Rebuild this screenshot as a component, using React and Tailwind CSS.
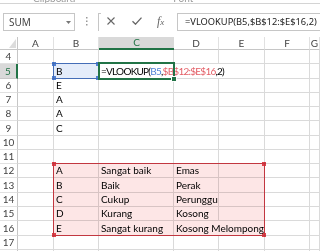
import clsx from "clsx";

const COLS = [
  { id: "A", w: "w-[36px]" },
  { id: "B", w: "w-[45px]" },
  { id: "C", w: "w-[75px]" },
  { id: "D", w: "w-[45px]" },
  { id: "E", w: "w-[46px]" },
  { id: "F", w: "w-[45px]" },
  { id: "G", w: "flex-1" },
];

const ROWS = [
  { n: 4, h: "h-[14px]" },
  { n: 5, h: "h-[15px]", B: "B", C: "formula", open: ["C", "D"] },
  { n: 6, h: "h-[14px]", B: "E" },
  { n: 7, h: "h-[14px]", B: "A" },
  { n: 8, h: "h-[14px]", B: "A" },
  { n: 9, h: "h-[15px]", B: "C" },
  { n: 10, h: "h-[14px]" },
  { n: 11, h: "h-[14px]" },
  { n: 12, h: "h-[14px]", B: "A", C: "Sangat baik", D: "Emas" },
  { n: 13, h: "h-[15px]", B: "B", C: "Baik", D: "Perak" },
  { n: 14, h: "h-[14px]", B: "C", C: "Cukup", D: "Perunggu" },
  { n: 15, h: "h-[14px]", B: "D", C: "Kurang", D: "Kosong" },
  { n: 16, h: "h-[15px]", B: "E", C: "Sangat kurang", D: "Kosong Melompong", open: ["D"] },
  { n: 17, h: "h-[14px]" },
  { n: 18, h: "h-[14px]" },
];

const Ribbon = () => (
  <div className="flex h-[4px] overflow-hidden border-b border-[#d4d4d4] text-[10px] leading-[10px] text-[#9a9a9a]">
    <span className="ml-[33px] -mt-[7px]">Clipboard</span>
    <span className="ml-[98px] -mt-[7px]">Font</span>
  </div>
);

const FormulaBar = () => (
  <div className="flex h-[33px] items-start pt-[9px] text-[#555]">
    <div className="ml-[3px] flex h-[18px] w-[72px] items-center justify-between border border-[#c6c6c6] pl-[5px] pr-[3px] font-['Noto_Sans',sans-serif] text-[10px] text-[#444]">
      <span>SUM</span>
      <svg width="5" height="3" viewBox="0 0 5 3">
        <path d="M0 0h5L2.5 3z" fill="#777" />
      </svg>
    </div>
    <svg className="ml-[11px] mt-[4px]" width="2" height="9" viewBox="0 0 2 9">
      <rect x="0" y="0" width="1.5" height="1.5" fill="#999" />
      <rect x="0" y="3.5" width="1.5" height="1.5" fill="#999" />
      <rect x="0" y="7" width="1.5" height="1.5" fill="#999" />
    </svg>
    <div className="ml-[10px] h-[18px] w-[3px] border-l border-t border-[#c6c6c6]" />
    <svg className="ml-[6px] mt-[4px]" width="8" height="8" viewBox="0 0 8 8">
      <path d="M0.5 0.5l7 7M7.5 0.5l-7 7" stroke="#666" strokeWidth="1.1" />
    </svg>
    <svg className="ml-[17px] mt-[4px]" width="10" height="8" viewBox="0 0 10 8">
      <path d="M0.5 4.2l3 3L9.5 0.6" stroke="#666" strokeWidth="1.3" fill="none" />
    </svg>
    <span className="ml-[15px] mt-[1px] w-[10px] font-['Liberation_Serif',serif] text-[12px] italic leading-[14px] text-[#666]">
      f<span className="text-[9px]">x</span>
    </span>
    <div className="ml-[10px] flex h-[18px] flex-1 items-center border-y border-l border-[#c6c6c6] pl-[7px] font-['Noto_Sans',sans-serif] text-[9.3px] whitespace-nowrap text-[#222]">
      =VLOOKUP(B5,$B$12:$E$16,2)
    </div>
  </div>
);

const Corner = ({ className, color }) => (
  <span className={clsx("absolute size-[4px]", color, className)} />
);

const Marks = ({ color }) => (
  <>
    <Corner color={color} className="-left-[2px] -top-[2px]" />
    <Corner color={color} className="-right-[2px] -top-[2px]" />
    <Corner color={color} className="-left-[2px] -bottom-[2px]" />
    <Corner color={color} className="-right-[2px] -bottom-[2px]" />
  </>
);

// Lato runs wider than Calibri on caps and digits, so the formula is tightened a bit
const Formula = () => (
  <span className="relative tracking-[-0.75px]">
    =VLOOKUP(<span className="text-[#4f80d6]">B5</span>,<span className="text-[#e35d65]">$B$12:$E$16</span>,2)
  </span>
);

const Cell = ({ col, row }) => {
  const value = row[col.id];
  const open = row.open?.includes(col.id);
  const isB5 = row.n === 5 && col.id === "B";
  const isC5 = row.n === 5 && col.id === "C";
  const isB12 = row.n === 12 && col.id === "B";
  return (
    <div
      className={clsx(
        "flex shrink-0 items-center whitespace-nowrap border-b border-[#dadada] pl-[2px]",
        col.w,
        !open && "border-r",
        (isB5 || isC5 || isB12) && "relative"
      )}
    >
      {value === "formula" ? <Formula /> : value}
      {isB5 && (
        <div className="absolute -left-[1px] -top-[1px] h-[16px] w-[46px] border border-[#4f80d6] bg-[#e4ecfa] mix-blend-multiply">
          <Marks color="bg-[#4f80d6]" />
        </div>
      )}
      {isC5 && (
        <div className="absolute -left-[1px] -top-[2px] h-[18px] w-[77px] border-2 border-[#217346]">
          <span className="absolute -bottom-[4px] -right-[4px] size-[6px] border border-white bg-[#217346]" />
        </div>
      )}
      {isB12 && (
        <div className="absolute -left-[1px] -top-[1px] h-[73px] w-[212px] border border-[#e3404a] bg-[#fde6e6] mix-blend-multiply">
          <Marks color="bg-[#e3404a]" />
        </div>
      )}
    </div>
  );
};

const HeaderRow = () => (
  <div className="flex h-[13px]">
    <div className="flex w-[18px] shrink-0 items-end justify-end border-r border-b border-[#c6c6c6] pb-[1px] pr-[1px]">
      <svg width="7" height="9" viewBox="0 0 7 9">
        <path d="M0 9h7V0z" fill="#dcdcdc" />
      </svg>
    </div>
    {COLS.map((col) => (
      <div
        key={col.id}
        className={clsx(
          "flex shrink-0 items-center justify-center",
          col.w,
          col.id === "C"
            ? "border-b-2 border-[#217346] bg-[#d9d9d9] text-[#217346]"
            : "border-r border-b border-r-[#e1e1e1] border-b-[#c6c6c6] text-[#444]"
        )}
      >
        {col.id}
      </div>
    ))}
  </div>
);

const Row = ({ row }) => (
  <div className={clsx("flex", row.h)}>
    <div
      className={clsx(
        "flex w-[18px] shrink-0 items-center justify-center border-b",
        row.n === 5
          ? "border-r-2 border-r-[#217346] border-b-[#c6c6c6] bg-[#d9d9d9] text-[#217346]"
          : "border-r border-r-[#c6c6c6] border-b-[#e1e1e1] text-[#444]"
      )}
    >
      {row.n}
    </div>
    {COLS.map((col) => (
      <Cell key={col.id} col={col} row={row} />
    ))}
  </div>
);

export default function App() {
  return (
    <div className="h-[251px] w-[320px] overflow-hidden bg-white font-['Lato','Liberation_Sans',sans-serif] text-[10px] text-black">
      <Ribbon />
      <FormulaBar />
      <div className="flex flex-col">
        <HeaderRow />
        {ROWS.map((row) => (
          <Row key={row.n} row={row} />
        ))}
      </div>
    </div>
  );
}
